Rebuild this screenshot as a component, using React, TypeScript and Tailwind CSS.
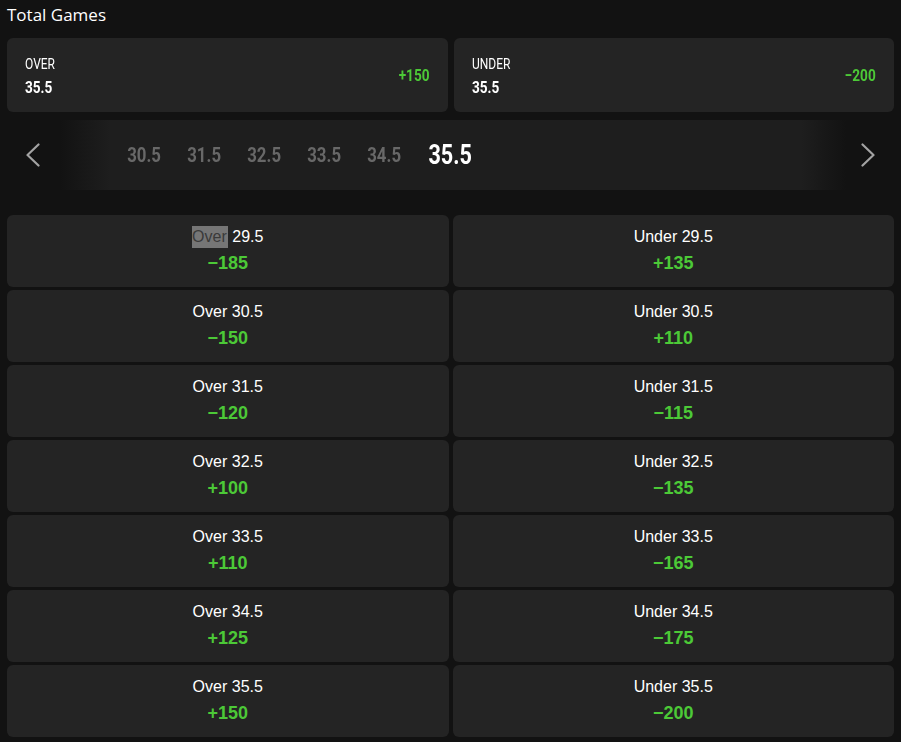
type Line = { total: string; over: string; under: string };

const lines: Line[] = [
  { total: '29.5', over: '−185', under: '+135' },
  { total: '30.5', over: '−150', under: '+110' },
  { total: '31.5', over: '−120', under: '−115' },
  { total: '32.5', over: '+100', under: '−135' },
  { total: '33.5', over: '+110', under: '−165' },
  { total: '34.5', over: '+125', under: '−175' },
  { total: '35.5', over: '+150', under: '−200' },
];

// narrow display face: Roboto squeezed horizontally
const narrow = "inline-block font-['Roboto',Arial,sans-serif] scale-x-[0.8]";

function PickCard({ side, total, price }: { side: string; total: string; price: string }) {
  return (
    <div className="flex h-[74px] items-center justify-between rounded-md bg-[#242424] pl-[18px] pr-[18px]">
      <div className="flex flex-col items-start text-white">
        <span className={`${narrow} origin-left text-[15px] leading-[18px]`}>{side}</span>
        <span className={`${narrow} mt-[5px] origin-left text-[17px] font-bold leading-[18px]`}>{total}</span>
      </div>
      <span className={`${narrow} origin-right text-[17px] font-bold leading-[18px] text-[#4cc937]`}>{price}</span>
    </div>
  );
}

function Chevron({ dir }: { dir: 'left' | 'right' }) {
  return (
    <svg width="14" height="24" viewBox="0 0 14 24" fill="none" stroke="#a3a3a3" strokeWidth="2.2" strokeLinecap="round" strokeLinejoin="round">
      {dir === 'left' ? <polyline points="12.5,1.5 1.5,12 12.5,22.5" /> : <polyline points="1.5,1.5 12.5,12 1.5,22.5" />}
    </svg>
  );
}

function LineStrip() {
  const others = ['30.5', '31.5', '32.5', '33.5', '34.5'];
  return (
    <div className="flex h-[70px] items-center bg-[linear-gradient(90deg,#121212_60px,#1e1e1e_110px,#1e1e1e_calc(100%-100px),#121212_calc(100%-55px))]">
      <button type="button" className="flex h-full w-[66px] items-center justify-center">
        <Chevron dir="left" />
      </button>
      <div className="grid flex-1 grid-cols-[1fr_72px_1fr] items-center">
        <div className="flex items-center justify-end">
          {others.map((v) => (
            <div key={v} className="flex w-[60px] justify-center">
              <span className={`${narrow} text-[21px] font-bold leading-none text-[#686868] blur-[0.6px]`}>{v}</span>
            </div>
          ))}
        </div>
        <div className="flex justify-center">
          <span className={`${narrow} text-[27px] font-bold leading-none text-white`}>35.5</span>
        </div>
        <div />
      </div>
      <button type="button" className="flex h-full w-[66px] items-center justify-center">
        <Chevron dir="right" />
      </button>
    </div>
  );
}

function OddsCell({ label, total, price, marked }: { label: string; total: string; price: string; marked?: boolean }) {
  return (
    <div className="flex h-[72px] flex-col items-center justify-center rounded-md bg-[#242424] pb-[2px] font-['Liberation_Sans',Arial,sans-serif]">
      <div className="text-[16px] leading-[22px] text-white">
        {marked ? (
          <span className="inline-block bg-[#767676] pr-[1px] text-[#3a3a3a]">{label}</span>
        ) : (
          label
        )}{' '}
        {total}
      </div>
      <div className="mt-[3px] text-[18px] font-bold leading-[24px] text-[#4cc937]">{price}</div>
    </div>
  );
}

export default function App() {
  return (
    <div className="min-h-[742px] w-full bg-[#121212] px-[7px] pb-[5px]">
      <h2 className="pt-[3px] font-['Open_Sans',sans-serif] text-[17px] leading-[24px] text-white">Total Games</h2>

      <div className="mt-[11px] grid grid-cols-2 gap-[6px]">
        <PickCard side="OVER" total="35.5" price="+150" />
        <PickCard side="UNDER" total="35.5" price="−200" />
      </div>

      <div className="-mx-[7px] mt-[8px]">
        <LineStrip />
      </div>

      <div className="mt-[25px] grid grid-cols-2 gap-x-[4px] gap-y-[3px]">
        {lines.map((l, i) => (
          <div key={l.total} className="contents">
            <OddsCell label="Over" total={l.total} price={l.over} marked={i === 0} />
            <OddsCell label="Under" total={l.total} price={l.under} />
          </div>
        ))}
      </div>
    </div>
  );
}
